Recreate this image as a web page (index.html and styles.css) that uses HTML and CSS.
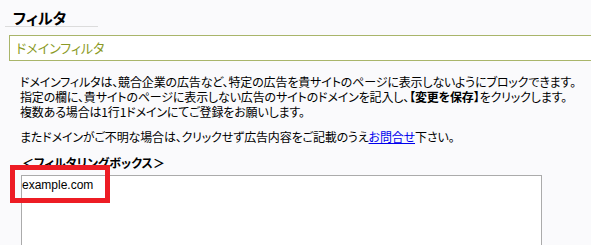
FILE: index.html
```html
<!DOCTYPE html>
<html lang="ja">
<head>
<meta charset="utf-8">
<link rel="stylesheet" href="styles.css">
</head>
<body>
<div class="page">
  <div class="title-wrap"><h1 class="title">フィルタ</h1></div>
  <div class="section-bar">ドメインフィルタ</div>
  <div class="desc">
    <p class="para">ドメインフィルタは、競合企業の広告など、特定の広告を貴サイトのページに表示しないようにブロックできます。<br>指定の欄に、貴サイトのページに表示しない広告のサイトのドメインを記入し、<b>【変更を保存】</b>をクリックします。<br>複数ある場合は1行1ドメインにてご登録をお願いします。</p>
    <p class="para">またドメインがご不明な場合は、クリックせず広告内容をご記載のうえ<a class="link" href="#">お問合せ</a>下さい。</p>
  </div>
  <div class="box-heading">＜フィルタリングボックス＞</div>
  <div class="filterbox">example.com</div>
  <div class="highlight"></div>
</div>
</body>
</html>
```
FILE: styles.css
```css
html, body {
  margin: 0;
  padding: 0;
  background: #fafafc;
}
.page {
  position: relative;
  height: 245px;
  overflow: hidden;
  font-family: "Noto Sans CJK JP", "Liberation Sans", sans-serif;
  font-feature-settings: "palt";
  color: #000;
}
.title-wrap {
  padding-top: 9px;
  margin-left: 5px;
  width: 93px;
  border-bottom: 1px solid #dcdcdc;
}
.title {
  margin: 0 0 0 8px;
  font-size: 15px;
  line-height: 17px;
  font-weight: bold;
}
.section-bar {
  margin: 8px 0 0 9px;
  height: 24px;
  border: 1px solid #a9b56a;
  border-right: none;
  background: #fff;
  padding-left: 6px;
  font-size: 13px;
  line-height: 24px;
  color: #8b9a26;
}
.desc {
  margin: 13px 0 0 20px;
  font-size: 12px;
  line-height: 15px;
  letter-spacing: -0.15px;
}
.para {
  margin: 0 0 10px 0;
}
.para:last-child {
  margin-bottom: 0;
}
.link {
  color: #0000ee;
  text-decoration: underline;
}
.box-heading {
  margin: 12px 0 0 22px;
  font-size: 12px;
  line-height: 14px;
  font-weight: bold;
}
.filterbox {
  margin: 5px 0 0 21px;
  width: 519px;
  height: 80px;
  border: 1px solid #ababab;
  background: #fff;
  padding: 2px 0 0 0;
  font-family: "Liberation Sans", sans-serif;
  font-size: 12px;
  line-height: 14px;
}
.highlight {
  position: absolute;
  left: 10px;
  top: 165px;
  width: 90px;
  height: 28px;
  border: 5px solid #ed1c24;
}
```
